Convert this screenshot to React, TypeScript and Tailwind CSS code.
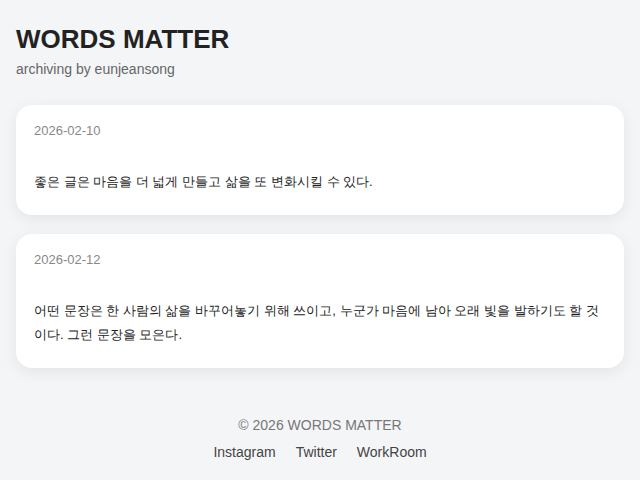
const posts = [
  {
    date: '2026-02-10',
    text: '좋은 글은 마음을 더 넓게 만들고 삶을 또 변화시킬 수 있다.',
  },
  {
    date: '2026-02-12',
    text:
      '어떤 문장은 한 사람의 삶을 바꾸어놓기 위해 쓰이고, 누군가 마음에 남아 오래 빛을 발하기도 할 것이다. 그런 문장을 모은다.',
  },
];

function PostCard({ date, text }: { date: string; text: string }) {
  return (
    <article className="rounded-2xl bg-white px-[18px] pt-[18px] pb-[21px] shadow-[0_4px_16px_rgba(0,0,0,0.07)]">
      <p className="text-[13px] leading-[15px] text-[#888]">{date}</p>
      <p className="mt-8 text-[13px] leading-6 text-[#222]">{text}</p>
    </article>
  );
}

export default function App() {
  return (
    <div className="min-h-screen bg-[#f4f5f7] px-4 pt-[24px] font-['Liberation_Sans',Arial,sans-serif]">
      <header>
        <h1 className="text-[26px] font-bold leading-[30px] text-[#222]">WORDS MATTER</h1>
        <p className="mt-[5px] text-sm text-[#666]">archiving by eunjeansong</p>
      </header>

      <main className="mt-[26px] flex flex-col gap-[19px]">
        {posts.map((p) => (
          <PostCard key={p.date} date={p.date} text={p.text} />
        ))}
      </main>

      <footer className="mt-[47px] flex flex-col items-center text-sm">
        <p className="text-[#777]">© 2026 WORDS MATTER</p>
        <nav className="mt-[7px] flex gap-5 text-[#444]">
          <a href="#">Instagram</a>
          <a href="#">Twitter</a>
          <a href="#">WorkRoom</a>
        </nav>
      </footer>
    </div>
  );
}
